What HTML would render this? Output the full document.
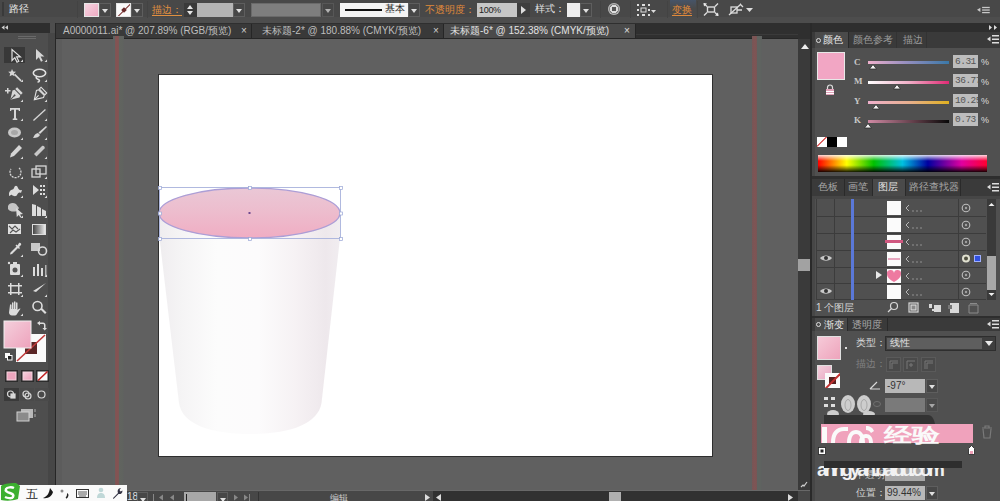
<!DOCTYPE html>
<html><head><meta charset="utf-8">
<style>
*{margin:0;padding:0;box-sizing:border-box}
html,body{width:1000px;height:501px;overflow:hidden;background:#535353;font-family:"Liberation Sans",sans-serif;color:#d8d8d8}
.a{position:absolute}
.t{position:absolute;white-space:nowrap;line-height:1}
.dd{width:12px;height:14px;background:#474747;border:1px solid #5e5e5e}
.dd::after{content:"";position:absolute;left:2px;top:5px;border-left:3px solid transparent;border-right:3px solid transparent;border-top:4px solid #e0e0e0}
.up{width:0;height:0;border-left:3.5px solid transparent;border-right:3.5px solid transparent;border-bottom:4px solid #e6e6e6}
.dn{width:0;height:0;border-left:3.5px solid transparent;border-right:3.5px solid transparent;border-top:4px solid #e6e6e6}
.bx{width:25px;height:13px;background:#bdbdbd;color:#555;font-size:9.5px;line-height:13px;padding-left:2px;font-family:"Liberation Mono",monospace;letter-spacing:-0.5px;overflow:hidden;white-space:nowrap}
</style></head><body>
<!-- top control bar -->
<div class="a" style="left:0;top:0;width:1000px;height:23px;background:#484848"></div>
<div class="a" style="left:0;top:17px;width:1000px;height:6px;background:#4d4d4d"></div>


<!-- TOPBAR DETAILS -->
<div class="a" style="left:2px;top:2px;width:2px;height:14px;background:#3a3a3a"></div>
<div class="t" style="left:9px;top:4px;font-size:10px;color:#e8e8e8">路径</div>
<div class="a" style="left:77px;top:1px;width:1px;height:17px;background:#434343"></div>
<div class="a" style="left:84px;top:3px;width:15px;height:14px;background:linear-gradient(135deg,#f6d4e0,#eeaac2);border:1px solid #e6e6e6"></div>
<div class="a dd" style="left:99px;top:3px"></div>
<div class="a" style="left:116px;top:3px;width:15px;height:14px;background:#fafafa;border:1px solid #e6e6e6;overflow:hidden"><div class="a" style="left:-3px;top:6px;width:20px;height:1.2px;background:#7a3030;transform:rotate(-45deg)"></div><div class="a" style="left:5px;top:4px;width:4px;height:4px;background:#6a2a2a;transform:rotate(45deg)"></div></div>
<div class="a dd" style="left:131px;top:3px"></div>
<div class="a" style="left:147px;top:1px;width:1px;height:17px;background:#434343"></div>
<div class="t" style="left:152px;top:5px;font-size:10px;color:#e09040;border-bottom:1px solid #e09040;padding-bottom:0px">描边：</div>
<div class="a" style="left:184px;top:3px;width:13px;height:14px;background:#3a3a3a"><div class="a up" style="left:3px;top:2px"></div><div class="a dn" style="left:3px;top:8px"></div></div>
<div class="a" style="left:197px;top:3px;width:36px;height:14px;background:#b4b4b4"></div>
<div class="a dd" style="left:233px;top:3px"></div>
<div class="a" style="left:251px;top:3px;width:70px;height:14px;background:#7e7e7e;border:1px solid #6a6a6a"></div>
<div class="a dd" style="left:322px;top:3px;opacity:.7"></div>
<div class="a" style="left:340px;top:3px;width:68px;height:14px;background:#f4f4f4"><div class="a" style="left:5px;top:6px;width:37px;height:2px;background:#111"></div><div class="t" style="left:45px;top:1px;font-size:10px;color:#222">基本</div></div>
<div class="a dd" style="left:408px;top:3px"></div>
<div class="t" style="left:425px;top:5px;font-size:10px;color:#e08a3a">不透明度：</div>
<div class="a" style="left:477px;top:3px;width:40px;height:14px;background:#c6c6c6"><div class="t" style="left:2px;top:3px;font-size:9px;color:#222;letter-spacing:-0.3px">100%</div></div>
<div class="a" style="left:517px;top:3px;width:13px;height:14px;background:#3e3e3e"><div class="a" style="left:4px;top:3px;width:0;height:0;border-left:5px solid #ddd;border-top:4px solid transparent;border-bottom:4px solid transparent"></div></div>
<div class="t" style="left:535px;top:4px;font-size:10px;color:#e0e0e0">样式：</div>
<div class="a" style="left:567px;top:3px;width:13px;height:14px;background:#eeeeee"></div>
<div class="a dd" style="left:580px;top:3px"></div>
<div class="a" style="left:600px;top:1px;width:1px;height:17px;background:#434343"></div>
<div class="a" style="left:608px;top:3px;width:12px;height:12px;border-radius:50%;background:radial-gradient(circle,#555 25%,#ddd 30%,#ddd 45%,#777 50%,#ccc 70%)"></div>
<div class="a" style="left:630px;top:1px;width:1px;height:17px;background:#434343"></div>
<svg class="a" style="left:636px;top:2px" width="22" height="16"><g fill="#ddd"><rect x="1" y="2" width="2" height="2"/><rect x="6" y="2" width="3" height="2"/><rect x="12" y="2" width="2" height="2"/><rect x="1" y="7" width="2" height="2"/><rect x="12" y="7" width="2" height="2"/><rect x="1" y="12" width="2" height="2"/><rect x="6" y="12" width="3" height="2"/><rect x="12" y="12" width="2" height="2"/><rect x="5" y="6" width="5" height="4" fill="none" stroke="#ddd"/><path d="M15 8h5l-2.5 3z"/></g></svg>
<div class="a" style="left:667px;top:1px;width:1px;height:17px;background:#434343"></div>
<div class="a" style="left:670px;top:0px;width:26px;height:17px;background:linear-gradient(180deg,#465468,#4a4a4a 50%)"></div>
<div class="t" style="left:672px;top:5px;font-size:10px;color:#e08a3a;border-bottom:1px solid #e08a3a">变换</div>
<div class="a" style="left:697px;top:1px;width:1px;height:17px;background:#434343"></div>
<svg class="a" style="left:703px;top:2px" width="16" height="15"><g stroke="#dcdcdc" stroke-width="1.4" fill="none"><rect x="4.5" y="5" width="7" height="5"/><path d="M1 1.5l3 3M15 1.5l-3 3M1 13.5l3-3M15 13.5l-3-3"/></g><g fill="#e8e8e8"><path d="M0.5 1l3.5 0.5-3 3z"/><path d="M15.5 14l-3.5-.5 3-3z"/></g></svg>
<svg class="a" style="left:727px;top:2px" width="30" height="15"><g stroke="#dcdcdc" stroke-width="1.3" fill="none"><rect x="4" y="5" width="6" height="6"/><path d="M10 8h5M13 2l3 3M2 13l12-11"/></g><path d="M19 6h7l-3.5 4z" fill="#ddd"/></svg>
<svg class="a" style="left:977px;top:6px" width="14" height="8"><g fill="#c8c8c8" transform="scale(.85)"><rect x="6" y="1" width="9" height="1.5"/><rect x="6" y="4" width="9" height="1.5"/><rect x="6" y="7" width="9" height="1.5"/><path d="M0 4.5l4-2.5v5z"/></g></svg>

<!-- tab bar -->
<div class="a" style="left:0;top:23px;width:1000px;height:16px;background:#2f2f2f"></div>


<!-- TABS -->
<div class="a" style="left:56px;top:24px;width:195px;height:15px;background:#393939"></div>
<div class="t" style="left:63px;top:26px;font-size:10px;color:#bdbdbd">A0000011.ai* @ 207.89% (RGB/预览)</div>
<div class="t" style="left:241px;top:26px;font-size:10px;color:#cfcfcf">×</div>
<div class="a" style="left:251px;top:24px;width:1px;height:15px;background:#262626"></div>
<div class="a" style="left:252px;top:24px;width:191px;height:15px;background:#393939"></div>
<div class="t" style="left:262px;top:26px;font-size:10px;color:#bdbdbd">未标题-2* @ 180.88% (CMYK/预览)</div>
<div class="t" style="left:433px;top:26px;font-size:10px;color:#cfcfcf">×</div>
<div class="a" style="left:443px;top:24px;width:1px;height:15px;background:#262626"></div>
<div class="a" style="left:444px;top:24px;width:191px;height:15px;background:#4a4a4a"></div>
<div class="t" style="left:450px;top:26px;font-size:10px;color:#e2e2e2">未标题-6* @ 152.38% (CMYK/预览)</div>
<div class="t" style="left:624px;top:26px;font-size:10px;color:#e0e0e0">×</div>
<div class="a" style="left:635px;top:24px;width:1px;height:15px;background:#262626"></div>
<div class="a" style="left:636px;top:34px;width:162px;height:1px;background:#3a3a3a"></div><div class="a" style="left:56px;top:38px;width:742px;height:1px;background:#262626"></div>

<!-- left toolbar -->
<div class="a" style="left:0;top:23px;width:55px;height:478px;background:#4e4e4e"></div>
<div class="a" style="left:0;top:23px;width:50px;height:10px;background:#2e2e2e"></div>
<div class="a" style="left:48px;top:33px;width:7px;height:468px;background:#464646"></div>
<div class="a" style="left:55px;top:23px;width:1px;height:478px;background:#262626"></div>


<!-- TOOLBAR DETAILS -->
<svg class="a" style="left:0;top:23px" width="55" height="420" viewBox="0 23 55 420">
<g fill="#d0d0d0"><path d="M1.5 27.5l3-2.3v4.6zM5 27.5l3-2.3v4.6z"/></g>
<g fill="#6a6a6a"><rect x="18" y="36" width="18" height="1"/><rect x="18" y="38" width="18" height="1"/></g>
<rect x="4" y="47" width="21" height="16" fill="#383838"/>
<g fill="none" stroke="#e2e2e2" stroke-width="1.2">
<path d="M12 49.5v11l2.8-2.8 2.2 4.5 1.8-.9-2.2-4.4h3.8z"/>
</g>
<g fill="#d6d6d6">
<path d="M36 49v11l2.8-2.8 2.2 4.5 1.8-.9-2.2-4.4h3.8z"/>
<path d="M23 62l-2.5 0 2.5-2.5z M47 62l-2.5 0 2.5-2.5z"/>
<!-- magic wand -->
<path d="M12 69l1.2 2.5 2.8.3-2 1.8.6 2.7-2.5-1.4-2.5 1.4.6-2.7-2-1.8 2.8-.3z"/>
<path d="M14 75l1.2-1.2 6.5 6.5-1.2 1.2z"/>
<path d="M23 82l-2.5 0 2.5-2.5z M47 82l-2.5 0 2.5-2.5z"/>
<!-- pen + -->
<path d="M5 90h2v-2h1.5v2h2v1.5h-2v2h-1.5v-2h-2z"/>
<g transform="translate(9,87) rotate(45 7 7)"><path d="M7 15L2 7L3 5h8l1 2z"/><rect x="3" y="1.5" width="8" height="2.5"/><path d="M7 9v6" stroke="#505050" stroke-width="1"/><circle cx="7" cy="9" r="1" fill="#505050"/></g>
<g transform="translate(33,87) rotate(45 7 7)" fill="none" stroke="#e2e2e2" stroke-width="1.1"><path d="M7 15L2 7L3 5h8l1 2z"/><rect x="3" y="1.5" width="8" height="2.5"/><path d="M7 9v6"/></g>
<!-- lasso -->
<g fill="none" stroke="#e2e2e2" stroke-width="1.6"><ellipse cx="39.5" cy="73" rx="6.2" ry="3.8"/><path d="M37 76c-2 2 0 3 1.5 3.5s1 2.5-1 2.5"/></g>
<path d="M23 102l-2.5 0 2.5-2.5z M47 102l-2.5 0 2.5-2.5z"/>
<!-- T -->
<path d="M10 108h10v3h-1l-.7-1.3h-2.3v8.5l1.3.6v1.2h-4.6v-1.2l1.3-.6v-8.5h-2.3l-.7 1.3h-1z"/>
<path d="M33 120l12-11 .9.9-12 11z"/>
<path d="M23 121l-2.5 0 2.5-2.5z M47 121l-2.5 0 2.5-2.5z"/>
<!-- ellipse -->
<ellipse cx="14.5" cy="132.5" rx="6.5" ry="5" fill="#c8c8c8"/>
<ellipse cx="14.5" cy="132.5" rx="3.5" ry="2.5" fill="#a8a8a8"/>
<!-- brush -->
<path d="M46 126l1 1-7 7-1.5-1.5z"/>
<path d="M38 133l2 2c-1 2-3 3-7 3 1-1 1-4 5-5z"/>
<path d="M23 140l-2.5 0 2.5-2.5z M47 140l-2.5 0 2.5-2.5z"/>
<!-- pencil -->
<path d="M19 145l3 3-8 8-4 1.5 1-4z"/>
<path d="M34 154l8-8c1.5-1 3.5 1 2.5 2.5l-8 8z" fill="#c8c8c8"/>
<path d="M23 159l-2.5 0 2.5-2.5z M47 159l-2.5 0 2.5-2.5z"/>
</g>
<g fill="none" stroke="#d8d8d8" stroke-width="1.3">
<!-- rotate -->
<path d="M19 168a5.5 5.5 0 1 1-8 1" stroke-dasharray="2 1"/>
<!-- scale -->
<rect x="32" y="169" width="8" height="8"/><rect x="36" y="166" width="10" height="8"/>
</g>
<g fill="#dcdcdc">
<path d="M23 179l-2.5 0 2.5-2.5z M47 179l-2.5 0 2.5-2.5z"/>
<!-- warp -->
<path d="M9 193c2-5 4-2 5-5s3-3 4 0 4 2 4 2l-1 3c-2-1-3 0-4 2s-4 1-5 0-2 1-3 1z"/>
<!-- free transform -->
<path d="M33 185l6 5-6 5z"/><rect x="40" y="185" width="2" height="2"/><rect x="43" y="185" width="2" height="2"/><rect x="40" y="189" width="2" height="2"/><rect x="43" y="189" width="2" height="2"/><rect x="40" y="193" width="2" height="2"/><rect x="43" y="193" width="2" height="2"/>
<path d="M23 198l-2.5 0 2.5-2.5z M47 198l-2.5 0 2.5-2.5z"/>
<!-- shape builder -->
<path d="M8 206c1-3 5-4 8-2l3 4 -2 3c-3 1-7 1-9-2z" fill="#c4c4c4"/>
<path d="M16 208l7 6-3 .5 1.5 2.5-1.2.6-1.5-2.5-2 2z"/>
<!-- perspective grid -->
<path d="M32 204l4 1v11h-4zM37 206l4 2v8h-4zM42 209l4 2v5h-4z"/>
<path d="M23 218l-2.5 0 2.5-2.5z M47 218l-2.5 0 2.5-2.5z"/>
<!-- mesh -->
<rect x="8" y="224" width="13" height="10" fill="#e0e0e0"/>
<path d="M9 226l3 3 3-3 3 3M10 233l3-3 3 2 4-3" stroke="#555" stroke-width="1.1" fill="none"/>
</g>
<defs><linearGradient id="gtool" x1="0" x2="1"><stop offset="0" stop-color="#3c3c3c"/><stop offset="1" stop-color="#f0f0f0"/></linearGradient></defs>
<rect x="32.5" y="224.5" width="13" height="10" fill="url(#gtool)" stroke="#ddd" stroke-width="1"/>
<g fill="#dcdcdc">
<!-- eyedropper -->
<path d="M19 243c1-1 3 1 2 2l-2 2 1 1-1 1-1-1-6 6-2 .5.5-2 6-6-1-1 1-1 1 1z"/>
<path d="M23 257l-2.5 0 2.5-2.5z"/>
<!-- blend -->
<rect x="31" y="243" width="9" height="8" fill="#c8c8c8"/>
<circle cx="42.5" cy="251" r="4" fill="none" stroke="#d8d8d8" stroke-width="1.6"/>
<!-- symbol sprayer -->
<rect x="10" y="264" width="10" height="11" rx="1"/>
<circle cx="15" cy="270" r="2.5" fill="#555"/>
<rect x="13" y="262" width="4" height="2"/>
<circle cx="9" cy="263" r="1.2"/>
<path d="M23 277l-2.5 0 2.5-2.5z M47 277l-2.5 0 2.5-2.5z"/>
<!-- graph -->
<rect x="33" y="267" width="2" height="9"/><rect x="37" y="264" width="2" height="12"/><rect x="41" y="268" width="2" height="8"/><rect x="45" y="265" width="1.5" height="11" opacity=".7"/>
<!-- artboard tool -->
<path d="M8 285h14v1.5h-14zM8 292h14v1.5h-14zM10 283h1.5v12h-1.5zM18 283h1.5v12h-1.5z"/>
<!-- slice -->
<path d="M46 283l-13 8 3 1z"/>
<path d="M23 297l-2.5 0 2.5-2.5z M47 297l-2.5 0 2.5-2.5z"/>
<!-- hand -->
<path d="M10 305c0-1 1.5-1 1.5 0v4h.5v-6c0-1 1.5-1 1.5 0v6h.5v-7c0-1 1.5-1 1.5 0v7h.5v-6c0-1 1.5-1 1.5 0v7c1-1 2.2-2 3-1.2l-3.5 5.2c-.5 1-1.5 1.5-3 1.5h-2c-2 0-3-1.5-3-3z"/>
<!-- zoom -->
<circle cx="37.5" cy="306" r="4.5" fill="none" stroke="#dcdcdc" stroke-width="1.6"/>
<path d="M40.5 309.5l1.5-1.5 4.5 4.5-1.5 1.5z"/>
<path d="M23 316l-2.5 0 2.5-2.5z"/>
</g>
<!-- fill/stroke -->
<defs><linearGradient id="gfill" x1="0" y1="0" x2="1" y2="1"><stop offset="0" stop-color="#f4d0dc"/><stop offset="1" stop-color="#eea2bc"/></linearGradient></defs>
<path d="M16 334h30v28h-30z" fill="#fafafa"/>
<rect x="25" y="342" width="12" height="12" fill="#5a2626"/>
<path d="M17 361l28-26" stroke="#c03a3a" stroke-width="1.6"/>
<rect x="4" y="321" width="27" height="27" fill="url(#gfill)" stroke="#f0f0f0" stroke-width="1"/>
<g fill="#dcdcdc"><path d="M37 323l3-2v1.5h3c1.5 0 2.5 1 2.5 2.5v3h1.5l-2.3 2.5-2.2-2.5h1.5v-3c0-.5-.5-1-1-1h-3v1.5z"/>
<rect x="5" y="353" width="5" height="5" fill="#fafafa"/><rect x="7.5" y="355.5" width="4.5" height="4.5" fill="#222" stroke="#fafafa" stroke-width="1"/></g>
<rect x="5" y="370" width="13" height="12" fill="#2c2c2c"/>
<rect x="6.5" y="371.5" width="10" height="9" fill="#f4d4de"/><rect x="7.5" y="372.5" width="8" height="7" fill="#eca6be"/>
<rect x="21" y="370" width="13" height="12" fill="#2c2c2c"/>
<rect x="22.5" y="371.5" width="10" height="9" fill="#f4d4de"/><rect x="23.5" y="372.5" width="8" height="7" fill="url(#gfill)"/>
<rect x="36" y="370" width="13" height="12" fill="#2c2c2c"/>
<rect x="37.5" y="371.5" width="10" height="9" fill="#fafafa"/>
<path d="M38 380.5l9.5-9" stroke="#c02020" stroke-width="1.6"/>
<rect x="4" y="388" width="15" height="13" fill="#3a3a3a"/>
<rect x="20" y="388" width="14" height="13" fill="#4a4a4a"/>
<rect x="35" y="388" width="14" height="13" fill="#4a4a4a"/>
<g fill="none" stroke="#d8d8d8" stroke-width="1.2">
<circle cx="10.5" cy="394" r="3"/><rect x="11" y="394" width="4" height="4" fill="#d8d8d8"/>
<circle cx="26" cy="394" r="3"/><circle cx="28" cy="396" r="3"/>
<circle cx="41.5" cy="394.5" r="3.5"/>
</g>
<rect x="21" y="409" width="12" height="9" fill="#b8b8b8"/>
<rect x="17" y="412" width="12" height="9" fill="#8a8a8a" stroke="#cfcfcf" stroke-width="1"/>
<path d="M35 409v3M35 414v3" stroke="#aaa"/>
</svg>

<!-- canvas -->
<div class="a" style="left:56px;top:39px;width:742px;height:453px;background:#606060"></div>
<div class="a" style="left:56px;top:39px;width:6px;height:453px;background:#5c5c5c"></div>
<!-- artboard -->
<div class="a" style="left:158px;top:74px;width:555px;height:383px;background:#2e2e2e"></div>
<div class="a" style="left:159px;top:74px;width:554px;height:1px;background:#383838"></div>
<div class="a" style="left:159px;top:75px;width:553px;height:381px;background:#ffffff"></div>

<!-- CUP -->
<svg class="a" style="left:0;top:0" width="1000" height="501">
<defs>
<linearGradient id="gbody" x1="0" x2="1" y1="0" y2="0">
<stop offset="0" stop-color="#efedef"/><stop offset="0.12" stop-color="#f5f4f5"/><stop offset="0.32" stop-color="#fcfcfc"/><stop offset="0.55" stop-color="#fcfbfc"/><stop offset="0.75" stop-color="#f6f2f4"/><stop offset="0.92" stop-color="#eee8ec"/><stop offset="1" stop-color="#f1edf0"/>
</linearGradient>
<linearGradient id="gtop" x1="0" x2="0" y1="0" y2="1">
<stop offset="0" stop-color="#eac8d6"/><stop offset="0.5" stop-color="#edbccd"/><stop offset="1" stop-color="#f0adc3"/>
</linearGradient>
</defs>
<path d="M159.5 213L340 213L340 238L321.5 403C318 424 290 434 250 434C210 434 182 424 179 403L159.5 238Z" fill="url(#gbody)"/>
<ellipse cx="249.5" cy="213" rx="90.5" ry="25" fill="url(#gtop)" stroke="#ac9ed6" stroke-width="1.3"/>
<rect x="159.5" y="187.5" width="181" height="51" fill="none" stroke="#a8b2dc" stroke-width="0.9"/>
<g fill="#fff" stroke="#98a4d4" stroke-width="0.7" transform="translate(0.5,0.5)">
<rect x="158" y="186" width="3" height="3"/><rect x="248" y="186" width="3" height="3"/><rect x="339" y="186" width="3" height="3"/>
<rect x="158" y="211.5" width="3" height="3"/><rect x="339" y="211.5" width="3" height="3"/>
<rect x="158" y="237" width="3" height="3"/><rect x="248" y="237" width="3" height="3"/><rect x="339" y="237" width="3" height="3"/>
</g>
<rect x="248.5" y="212" width="2" height="2" fill="#704a90"/>
</svg>

<!-- guides -->
<div class="a" style="left:113px;top:36px;width:11px;height:456px;background:linear-gradient(90deg,#5e6262 0px,#5e6262 2px,#7c5656 2px,#865252 4px,#7c5656 6px,#61645f 6px,#60635f 10px,#5f6060 11px)"></div>
<div class="a" style="left:752px;top:36px;width:10px;height:456px;background:linear-gradient(90deg,#765656 0px,#805454 3px,#765656 5px,#5f6360 5px,#5f6360 9px,#5e5f60 10px)"></div>

<!-- vertical scrollbar -->
<div class="a" style="left:798px;top:39px;width:12px;height:453px;background:#3a3a3a"></div>

<!-- panel dock -->
<div class="a" style="left:810px;top:23px;width:190px;height:478px;background:#505050"></div>
<div class="a" style="left:810px;top:23px;width:2px;height:478px;background:#2a2a2a"></div><div class="a" style="left:812px;top:32px;width:3px;height:469px;background:#474747"></div>
<div class="a" style="left:812px;top:23px;width:188px;height:9px;background:#2e2e2e"></div>


<!-- COLOR PANEL -->
<svg class="a" style="left:986px;top:24px" width="14" height="7"><path d="M3 1v5l3-2.5zM8 1v5l3-2.5z" fill="#ddd"/></svg>
<div class="a" style="left:812px;top:32px;width:188px;height:16px;background:#3a3a3a"></div>
<div class="a" style="left:815px;top:32px;width:33px;height:16px;background:#4a4a4a"></div>
<div class="a" style="left:816px;top:38px;width:5px;height:5px;border-radius:50%;border:1.5px solid #ddd"></div>
<div class="t" style="left:823px;top:35px;font-size:10px;color:#e8e8e8">颜色</div>
<div class="a" style="left:848px;top:32px;width:1px;height:16px;background:#2a2a2a"></div>
<div class="t" style="left:853px;top:35px;font-size:10px;color:#9a9a9a">颜色参考</div>
<div class="a" style="left:896px;top:32px;width:1px;height:16px;background:#333"></div>
<div class="t" style="left:903px;top:35px;font-size:10px;color:#9a9a9a">描边</div>
<div class="a" style="left:926px;top:32px;width:1px;height:16px;background:#333"></div>
<svg class="a" style="left:986px;top:34px" width="14" height="11"><g fill="#ddd"><rect x="6" y="1" width="7" height="1.5"/><rect x="6" y="4.5" width="7" height="1.5"/><rect x="6" y="8" width="7" height="1.5"/><path d="M1 5l3.5-2.5v5z"/></g></svg>

<div class="a" style="left:817px;top:52px;width:28px;height:28px;background:#f2a6c4;border:1px solid #e8e8e8"></div>
<svg class="a" style="left:825px;top:84px" width="10" height="12"><path d="M2.5 5V3.5a2.5 2.5 0 0 1 5 0V5" fill="none" stroke="#ddd" stroke-width="1.2"/><rect x="1" y="5" width="8" height="6" fill="#e0a0b8"/><rect x="1" y="7" width="8" height="1" fill="#fff"/><rect x="1" y="9" width="8" height="1" fill="#fff"/></svg>

<div class="t" style="left:854px;top:58px;font-size:9px;color:#c8c8c8;font-family:'Liberation Serif',serif;font-weight:bold">C</div>
<div class="t" style="left:854px;top:77px;font-size:9px;color:#c8c8c8;font-family:'Liberation Serif',serif;font-weight:bold">M</div>
<div class="t" style="left:854px;top:97px;font-size:9px;color:#c8c8c8;font-family:'Liberation Serif',serif;font-weight:bold">Y</div>
<div class="t" style="left:854px;top:116px;font-size:9px;color:#c8c8c8;font-family:'Liberation Serif',serif;font-weight:bold">K</div>
<div class="a" style="left:868px;top:61px;width:81px;height:3px;background:linear-gradient(90deg,#eeb0cc,#9a90c0 45%,#3a78a8)"></div>
<div class="a" style="left:868px;top:81px;width:81px;height:3px;background:linear-gradient(90deg,#ffffff,#f0b0c8 50%,#e02a74)"></div>
<div class="a" style="left:868px;top:101px;width:81px;height:3px;background:linear-gradient(90deg,#eeb0cc,#e8b090 50%,#e0b020)"></div>
<div class="a" style="left:868px;top:120px;width:81px;height:3px;background:linear-gradient(90deg,#d08aa4,#5a3a44 60%,#080808)"></div>
<svg class="a" style="left:860px;top:62px" width="50" height="68"><g fill="#f4f4f4" stroke="#2a2a2a" stroke-width=".8"><path d="M13 2.5l3.5 4.5h-7z"/><path d="M37 22.5l3.5 4.5h-7z"/><path d="M16 42.5l3.5 4.5h-7z"/><path d="M8 61.5l3.5 4.5h-7z"/></g></svg>
<div class="a bx" style="left:953px;top:55px">6.31</div>
<div class="a bx" style="left:953px;top:74px">36.77</div>
<div class="a bx" style="left:953px;top:94px">10.25</div>
<div class="a bx" style="left:953px;top:113px">0.73</div>
<div class="t" style="left:981px;top:58px;font-size:9px;color:#ddd">%</div>
<div class="t" style="left:981px;top:78px;font-size:9px;color:#ddd">%</div>
<div class="t" style="left:981px;top:97px;font-size:9px;color:#ddd">%</div>
<div class="t" style="left:981px;top:116px;font-size:9px;color:#ddd">%</div>

<div class="a" style="left:817px;top:137px;width:10px;height:10px;background:#fff;overflow:hidden"><div class="a" style="left:-2px;top:4px;width:14px;height:1.2px;background:#d02020;transform:rotate(-45deg)"></div></div>
<div class="a" style="left:827px;top:137px;width:10px;height:10px;background:#000"></div>
<div class="a" style="left:837px;top:137px;width:10px;height:10px;background:#fff"></div>
<div class="a" style="left:818px;top:155px;width:169px;height:17px;background:linear-gradient(180deg,rgba(255,255,255,.85) 0%,rgba(255,255,255,0) 35%,rgba(0,0,0,0) 60%,rgba(0,0,0,.9) 100%),linear-gradient(90deg,#ff0000 0%,#ffff00 17%,#00c000 33%,#00c0e0 50%,#0000a0 65%,#e000a0 85%,#ff0030 100%)"></div>
<div class="a" style="left:812px;top:176px;width:188px;height:3px;background:#2e2e2e"></div>


<!-- LAYERS PANEL -->
<div class="a" style="left:812px;top:179px;width:188px;height:17px;background:#3a3a3a"></div>
<div class="t" style="left:818px;top:182px;font-size:10px;color:#a8a8a8">色板</div>
<div class="a" style="left:844px;top:179px;width:1px;height:17px;background:#2a2a2a"></div>
<div class="t" style="left:848px;top:182px;font-size:10px;color:#a8a8a8">画笔</div>
<div class="a" style="left:872px;top:179px;width:1px;height:17px;background:#2a2a2a"></div>
<div class="a" style="left:873px;top:179px;width:32px;height:17px;background:#4a4a4a"></div>
<div class="t" style="left:878px;top:182px;font-size:10px;color:#e8e8e8">图层</div>
<div class="a" style="left:905px;top:179px;width:1px;height:17px;background:#2a2a2a"></div>
<div class="t" style="left:909px;top:182px;font-size:10px;color:#a8a8a8">路径查找器</div>
<div class="a" style="left:960px;top:179px;width:1px;height:17px;background:#2a2a2a"></div>
<svg class="a" style="left:986px;top:182px" width="14" height="11"><g fill="#ddd"><rect x="6" y="1" width="7" height="1.5"/><rect x="6" y="4.5" width="7" height="1.5"/><rect x="6" y="8" width="7" height="1.5"/><path d="M1 5l3.5-2.5v5z"/></g></svg>
<div class="a" style="left:812px;top:196px;width:188px;height:3px;background:#464646"></div>
<svg class="a" style="left:812px;top:196px" width="188" height="106" viewBox="812 196 188 106">
<rect x="816" y="199" width="170" height="101" fill="#505050"/>
<g fill="none" stroke="#3c3c3c" stroke-width="1">
<path d="M816.5 199v101M834.5 199v101M851.5 199v101M958.5 199v101"/>
<path d="M816 216.5h170M816 233.5h170M816 250.5h170M816 267.5h170M816 283.5h170M816 299.5h170"/>
</g>
<rect x="851" y="199" width="3" height="101" fill="#5a78d8"/>
<g fill="#fbfbfb"><rect x="887" y="201" width="14" height="14"/><rect x="887" y="218" width="14" height="14"/><rect x="887" y="235" width="14" height="14"/><rect x="887" y="252" width="14" height="14"/><rect x="887" y="269" width="14" height="14"/><rect x="887" y="285" width="14" height="14"/></g>
<rect x="885" y="240" width="18" height="3" fill="#d05880"/>
<rect x="888" y="258" width="12" height="2" fill="#e8a8c0"/>
<path d="M894 282c-5-3-7-5-7-8a3 3 0 0 1 7 -1a3 3 0 0 1 7 1c0 3-2 5-7 8z" fill="#ee7aa0"/>
<path d="M876 271l6 4-6 4z" fill="#e8e8e8"/>
<g fill="none" stroke="#b8b8b8" stroke-width="1"><path d="M909 205l-3 3 3 3"/><path d="M909 222l-3 3 3 3"/><path d="M909 239l-3 3 3 3"/><path d="M909 256l-3 3 3 3"/><path d="M909 273l-3 3 3 3"/><path d="M909 289l-3 3 3 3"/></g>
<g fill="#a8a8a8"><circle cx="913" cy="211" r=".7"/><circle cx="917" cy="211" r=".7"/><circle cx="921" cy="211" r=".7"/><circle cx="913" cy="228" r=".7"/><circle cx="917" cy="228" r=".7"/><circle cx="921" cy="228" r=".7"/><circle cx="913" cy="245" r=".7"/><circle cx="917" cy="245" r=".7"/><circle cx="921" cy="245" r=".7"/><circle cx="913" cy="262" r=".7"/><circle cx="917" cy="262" r=".7"/><circle cx="921" cy="262" r=".7"/><circle cx="913" cy="279" r=".7"/><circle cx="917" cy="279" r=".7"/><circle cx="921" cy="279" r=".7"/><circle cx="913" cy="295" r=".7"/><circle cx="917" cy="295" r=".7"/><circle cx="921" cy="295" r=".7"/></g>
<g fill="none" stroke="#bdbdbd" stroke-width="1.1"><circle cx="966" cy="208" r="3.8"/><circle cx="966" cy="225" r="3.8"/><circle cx="966" cy="242" r="3.8"/><circle cx="966" cy="275" r="3.8"/><circle cx="966" cy="292" r="3.8"/></g>
<g fill="#a0a0a0"><circle cx="966" cy="208" r="1.2"/><circle cx="966" cy="225" r="1.2"/><circle cx="966" cy="242" r="1.2"/><circle cx="966" cy="275" r="1.2"/><circle cx="966" cy="292" r="1.2"/></g>
<circle cx="966" cy="258.5" r="4" fill="#e0e0d0"/><circle cx="966" cy="258.5" r="2" fill="#505040"/>
<rect x="974.5" y="255.5" width="6" height="6" fill="#3050e0" stroke="#a0b0ff" stroke-width="1"/>
<g transform="translate(818,253)"><path d="M2 5c2.5-3.5 9.5-3.5 12 0c-2.5 3.5-9.5 3.5-12 0z" fill="#c8c8c8"/><circle cx="8" cy="5" r="2" fill="#333"/></g>
<g transform="translate(818,286)"><path d="M2 5c2.5-3.5 9.5-3.5 12 0c-2.5 3.5-9.5 3.5-12 0z" fill="#c8c8c8"/><circle cx="8" cy="5" r="2" fill="#333"/></g>
<rect x="987" y="199" width="9" height="101" fill="#3a3a3a"/>
<rect x="987" y="256" width="9" height="34" fill="#a8a8a8"/>
<path d="M988.5 206l3-3 3 3z" fill="#f0f0f0"/><path d="M988.5 293l3 3 3-3z" fill="#f0f0f0"/>
</svg>
<div class="t" style="left:816px;top:303px;font-size:10px;color:#d8d8d8">1 个图层</div>
<svg class="a" style="left:885px;top:300px" width="100" height="16"><g fill="none" stroke="#d8d8d8" stroke-width="1.2"><circle cx="9" cy="6" r="3.5"/><path d="M6.5 8.5l-3.5 3.5"/><rect x="24" y="3" width="9" height="9"/><rect x="26" y="5" width="5" height="5" fill="#888"/></g>
<g fill="#d8d8d8"><rect x="44" y="4" width="3" height="4"/><rect x="49" y="5" width="7" height="7"/><path d="M47 9h2v2h-2z"/><rect x="65" y="3" width="9" height="10"/><rect x="63" y="5" width="4" height="4" fill="#777"/><path d="M84 5h9v8h-9z" fill="none" stroke="#8a8a8a"/><path d="M85 3h7v1h-7z" fill="#8a8a8a"/></g></svg>
<div class="a" style="left:812px;top:316px;width:188px;height:2px;background:#2e2e2e"></div>


<!-- GRADIENT PANEL -->
<div class="a" style="left:812px;top:318px;width:188px;height:13px;background:#3a3a3a"></div>
<div class="a" style="left:815px;top:318px;width:32px;height:13px;background:#4a4a4a"></div>
<div class="a" style="left:816px;top:322px;width:5px;height:5px;border-radius:50%;border:1.5px solid #ddd"></div>
<div class="t" style="left:824px;top:320px;font-size:10px;color:#e8e8e8">渐变</div>
<div class="a" style="left:847px;top:318px;width:1px;height:13px;background:#2a2a2a"></div>
<div class="t" style="left:852px;top:320px;font-size:10px;color:#a8a8a8">透明度</div>
<div class="a" style="left:887px;top:318px;width:1px;height:13px;background:#2a2a2a"></div>
<svg class="a" style="left:986px;top:319px" width="14" height="11"><g fill="#ddd"><rect x="6" y="1" width="7" height="1.5"/><rect x="6" y="4.5" width="7" height="1.5"/><rect x="6" y="8" width="7" height="1.5"/><path d="M1 5l3.5-2.5v5z"/></g></svg>

<div class="a" style="left:817px;top:336px;width:24px;height:24px;background:linear-gradient(135deg,#f6cad8,#eea4bc);border:1px solid #e0e0e0"></div>
<div class="a" style="left:845px;top:347px;width:2px;height:2px;background:#ddd"></div>
<div class="t" style="left:856px;top:338px;font-size:10px;color:#d8d8d8">类型：</div>
<div class="a" style="left:885px;top:336px;width:111px;height:15px;background:#3e3e3e;border:1px solid #2e2e2e"></div>
<div class="a" style="left:887px;top:338px;width:95px;height:11px;background:#5e5e5e"></div>
<div class="t" style="left:890px;top:338px;font-size:10px;color:#e0e0e0">线性</div>
<svg class="a" style="left:983px;top:338px" width="12" height="11"><path d="M2 3h8l-4 5z" fill="#e8e8e8"/></svg>
<div class="t" style="left:856px;top:359px;font-size:10px;color:#808080">描边：</div>
<div class="a" style="left:886px;top:357px;width:15px;height:15px;background:#4a4a4a;border:1px solid #5a5a5a"></div>
<div class="a" style="left:903px;top:357px;width:15px;height:15px;background:#4a4a4a;border:1px solid #5a5a5a"></div>
<div class="a" style="left:921px;top:357px;width:15px;height:15px;background:#4a4a4a;border:1px solid #5a5a5a"></div>
<svg class="a" style="left:886px;top:357px" width="50" height="15"><g fill="none" stroke="#777" stroke-width="1"><path d="M4 12V4h8M6 12V6h6"/><path d="M21 12V4h8M24 7h2v2h-2z"/><path d="M39 12V4h8M41 12V6h6"/></g></svg>

<div class="a" style="left:817px;top:365px;width:15px;height:15px;background:linear-gradient(135deg,#f4d0dc,#e8a8c4);border:1px solid #e0e0e0"></div>
<div class="a" style="left:825px;top:373px;width:15px;height:15px;background:#fafafa;overflow:hidden"><div class="a" style="left:4px;top:4px;width:7px;height:7px;background:#5a2020"></div><div class="a" style="left:-3px;top:7px;width:22px;height:1.5px;background:#c03030;transform:rotate(-45deg)"></div></div>
<div class="a" style="left:832px;top:365px;width:15px;height:15px;background:linear-gradient(135deg,#f4d0dc,#e8a8c4);border:1px solid #e0e0e0;display:none"></div>
<svg class="a" style="left:868px;top:379px" width="14" height="12"><path d="M2 10h10M2 10l7-7" fill="none" stroke="#d8d8d8" stroke-width="1.2"/></svg>
<div class="a" style="left:885px;top:379px;width:40px;height:14px;background:#b8b8b8"></div>
<div class="t" style="left:887px;top:381px;font-size:10px;color:#333">-97°</div>
<div class="a dd" style="left:926px;top:379px;width:12px;height:14px"></div>
<div class="a" style="left:885px;top:398px;width:40px;height:14px;background:#7a7a7a"></div>
<div class="a dd" style="left:926px;top:398px;width:12px;height:14px;opacity:.6"></div>
<svg class="a" style="left:823px;top:396px" width="14" height="14"><g fill="#ddd"><rect x="1" y="1" width="4" height="3"/><rect x="8" y="1" width="4" height="3"/><rect x="1" y="8" width="4" height="3"/><rect x="8" y="8" width="4" height="3"/></g></svg>
<!-- gradient slider -->
<div class="t" style="left:855px;top:470px;font-size:10px;color:#bdbdbd">不透明度：</div>
<div class="a" style="left:885px;top:467px;width:40px;height:14px;background:#a8a8a8"></div>
<div class="t" style="left:856px;top:488px;font-size:10px;color:#d8d8d8">位置：</div>
<div class="a" style="left:885px;top:486px;width:40px;height:14px;background:#b8b8b8"></div>
<div class="t" style="left:887px;top:488px;font-size:10px;color:#333">99.44%</div>
<div class="a dd" style="left:926px;top:486px;width:12px;height:14px"></div>
<svg class="a" style="left:980px;top:425px" width="14" height="14"><g fill="none" stroke="#7a7a7a" stroke-width="1.2"><path d="M2 3h10M5 3V1h4v2M3 4l1 9h6l1-9"/></g></svg>
<!-- watermark -->
<svg class="a" style="left:0;top:0" width="1000" height="501" viewBox="0 0 1000 501">
<defs><clipPath id="clipurl"><path d="M800 458h24v10h176v20h-200z"/></clipPath></defs>
<g fill="#cdcdcd"><ellipse cx="848" cy="404" rx="7" ry="9"/><ellipse cx="864" cy="404" rx="7" ry="9"/><ellipse cx="833" cy="414" rx="6" ry="4"/><ellipse cx="869" cy="414" rx="6" ry="3"/></g>
<g fill="none" stroke="#a8a8a8" stroke-width="1"><ellipse cx="848" cy="405" rx="3" ry="5.5"/><ellipse cx="864" cy="405" rx="3" ry="5.5"/><ellipse cx="877" cy="404" rx="3.5" ry="2.5" stroke="#707070"/></g>
<path d="M824 415h104c4 0 6 4 7 9h-111z" fill="#333333"/>
<rect x="821" y="424" width="152" height="19" fill="#f0a2bc"/>
<g fill="#fafafa">
<path d="M822 427h5v16h-5z"/>
<path d="M831 443c0-11 5-16 13-16h4v4h-4c-6 0-9 4-9 12z"/>
<path d="M847 443c0-9 4-13 9-13s9 4 9 13h-4c0-6-2-9-5-9s-5 3-5 9z"/>
<path d="M859 443c0-6 3-9 7-9s7 3 7 9h-4c0-4-1-5-3-5s-3 1-3 5z"/>
<path d="M866 426c4 0 7 2 8 5l-3 2c-1-2-3-3-5-3z"/>
</g>
<text x="884" y="442" font-size="20" fill="#fafafa" font-weight="bold" font-family="Liberation Sans,sans-serif" textLength="56" lengthAdjust="spacingAndGlyphs">经验</text>
<rect x="824" y="445" width="136" height="16" fill="#4e4e4e"/>
<rect x="824" y="461" width="138" height="7" fill="#2e2e2e"/>
<g fill="#fff" stroke="#222" stroke-width=".8"><rect x="818.5" y="447.5" width="7" height="7"/><path d="M968.5 448.5l3-3 3 3v6h-6z"/></g>
<rect x="820.5" y="449.5" width="3" height="3" fill="#222"/><rect x="970" y="451" width="3" height="3" fill="#f0a0b8"/>
<text x="817" y="476" font-size="19" fill="#f2f2f2" font-weight="bold" font-family="Liberation Sans,sans-serif" clip-path="url(#clipurl)" textLength="128">anngyan.baidu.com</text>
</svg>
<!-- status bar -->
<div class="a" style="left:127px;top:490px;width:683px;height:11px;background:#474747"></div>
<div class="a" style="left:127px;top:490px;width:683px;height:1px;background:#686868"></div>
<div class="t" style="left:127px;top:492px;font-size:10px;color:#ddd">18</div>
<div class="a dd" style="left:137px;top:492px;width:11px;height:10px"></div>
<svg class="a" style="left:150px;top:492px" width="30" height="9"><g fill="#888"><rect x="3" y="2" width="1" height="7"/><path d="M9 5.5l4-3v6z"/><path d="M20 5.5l4-3v6z"/></g></svg>
<div class="a" style="left:184px;top:492px;width:32px;height:9px;background:#a8a8a8"></div>
<div class="a" style="left:186px;top:494px;width:1px;height:7px;background:#222"></div>
<div class="a dd" style="left:217px;top:492px;width:11px;height:10px"></div>
<svg class="a" style="left:230px;top:492px" width="26" height="9"><g fill="#888"><path d="M4 2.5l4 3-4 3z"/><path d="M14 2.5l4 3-4 3z"/><rect x="19" y="2" width="1" height="7"/></g></svg>
<div class="a" style="left:258px;top:492px;width:1px;height:9px;background:#333"></div>
<div class="t" style="left:330px;top:494px;font-size:9px;color:#cfcfcf">编辑</div>
<svg class="a" style="left:422px;top:492px" width="12" height="9"><path d="M3 2l5 3.5-5 3.5z" fill="#ddd"/></svg>
<div class="a" style="left:433px;top:491px;width:365px;height:10px;background:#313131"></div>
<svg class="a" style="left:433px;top:492px" width="365" height="9"><path d="M8 2l-5 3.5 5 3.5z" fill="#ddd"/><path d="M355 2l5 3.5-5 3.5z" fill="#ddd"/></svg>
<div class="a" style="left:609px;top:492px;width:12px;height:9px;background:#b0b0b0"></div>
<div class="a" style="left:798px;top:259px;width:12px;height:12px;background:#a2a2a2"></div>
<svg class="a" style="left:800px;top:42px" width="10" height="8"><path d="M1 7l4-5 4 5z" fill="#eee"/></svg>
<svg class="a" style="left:799px;top:480px" width="10" height="10"><path d="M2 7l2-2 1 1 3-4" stroke="#ccc" stroke-width="1.2" fill="none"/></svg>

<!-- IME bar -->
<div class="a" style="left:0;top:485px;width:127px;height:16px;background:#fafafa"></div>
<svg class="a" style="left:0;top:480px" width="127" height="21">
<path d="M1 6c2-2 7-3 15-3l4 3-2 13c-6 2-12 2-17 1z" fill="#3cb030"/>
<path d="M14 8c-2-1-7-1-8 1s1 3 4 4 4 2 3 4-6 1-8 0" fill="none" stroke="#fff" stroke-width="2.5"/>
<text x="26" y="18" font-size="12" fill="#222" font-family="Liberation Sans,sans-serif">五</text>
<path d="M50 8c-1 5-2 8-7 10c5 1 9-2 10-6" fill="#1a1a1a"/>
<circle cx="62" cy="11" r="1.5" fill="#888"/><path d="M67 14c1 0 1 3-1 4" stroke="#222" stroke-width="1.6" fill="none"/>
<rect x="76.5" y="9.5" width="12" height="8" fill="none" stroke="#333" stroke-width="1"/><path d="M78 12h9M78 14h9M79 16h7" stroke="#333" stroke-width=".8"/>
<circle cx="101" cy="10" r="2.3" fill="#c0d8d8"/><path d="M97 18c0-4 2-5 4-5s4 1 4 5z" fill="#c0d8d8"/>
<path d="M113 18l5-5c-1-2 0-5 3-5l-1.5 2 1 1.5 2-1c0 3-2 4-4 3.5l-5 5z" fill="#334"/>
</svg>
</body></html>
